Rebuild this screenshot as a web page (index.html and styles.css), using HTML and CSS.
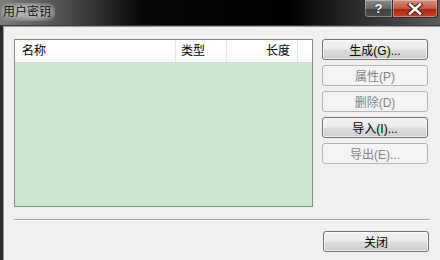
FILE: index.html
```html
<!DOCTYPE html>
<html lang="zh-CN">
<head>
  <meta charset="UTF-8" />
  <title>用户密钥</title>
  <link rel="stylesheet" href="styles.css">
</head>
<body>

<div class="window">
  <!-- Title bar -->
  <div class="titlebar">
    <span class="title">用户密钥</span>
    <div class="caption-buttons">
      <div class="cap-btn help">?</div>
      <div class="cap-btn close">
        <svg width="16" height="12" viewBox="0 0 16 12">
          <path d="M3 1.5 L13 10.5 M13 1.5 L3 10.5" stroke="#3a2020" stroke-width="4.6" stroke-linecap="square"/>
          <path d="M3 1.5 L13 10.5 M13 1.5 L3 10.5" stroke="#ffffff" stroke-width="2.6" stroke-linecap="square"/>
        </svg>
      </div>
    </div>
  </div>

  <div class="client">
    <div class="main">
      <!-- Key list -->
      <div class="listview">
        <div class="list-header">
          <div class="col col-name">名称</div>
          <div class="col col-type">类型</div>
          <div class="col col-len">长度</div>
          <div class="col col-fill"></div>
        </div>
        <div class="list-body"></div>
      </div>

      <!-- Actions -->
      <div class="actions">
        <button class="btn">生成(G)...</button>
        <button class="btn" disabled>属性(P)</button>
        <button class="btn" disabled>删除(D)</button>
        <button class="btn">导入(I)...</button>
        <button class="btn" disabled>导出(E)...</button>
      </div>
    </div>

    <div class="separator"></div>

    <div class="footer">
      <button class="btn">关闭</button>
    </div>
  </div>
</div>

</body>
</html>
```

FILE: styles.css
```css
body {
  margin: 0;
  padding: 0;
  width: 440px;
  height: 260px;
  overflow: hidden;
  background: #f0f0f0;
  font-family: "Liberation Sans", "Noto Sans CJK SC", sans-serif;
  font-size: 12px;
}

.window {
  height: 260px;
  display: flex;
  flex-direction: column;
}

/* Title bar */
.titlebar {
  height: 25px;
  flex: none;
  display: flex;
  justify-content: space-between;
  background: linear-gradient(to right, #7c7c7c 0px, #4a4a4a 70px, #080808 140px, #000000 290px, #2e2e2e 360px, #5a5a5a 440px);
}

.title {
  margin: 3px 0 0 1px;
  padding: 1px 4px 0 2px;
  height: 17px;
  font-size: 12px;
  line-height: 16px;
  color: #111111;
  border-radius: 6px;
  background: radial-gradient(ellipse at center, rgba(180,180,180,0.85) 40%, rgba(150,150,150,0.5) 75%, rgba(120,120,120,0) 100%);
  text-shadow: 0 0 4px rgba(210,210,210,0.9);
}

.caption-buttons {
  display: flex;
  align-self: flex-start;
  margin-right: 2px;
}

.cap-btn {
  height: 17px;
  display: flex;
  align-items: center;
  justify-content: center;
  border: 1px solid #2a2a2a;
  border-top: none;
  box-shadow: inset 0 0 0 1px rgba(255,255,255,0.35);
}

.help {
  width: 27px;
  border-radius: 0 0 0 4px;
  background: linear-gradient(#8a8a8a, #6a6a6a 50%, #3e3e3e 52%, #4e4e4e);
  color: #ffffff;
  font-weight: bold;
  font-size: 13px;
  text-shadow: 0 0 2px #000;
}

.close {
  width: 44px;
  border-left: none;
  border-radius: 0 0 4px 0;
  background: linear-gradient(#d78c7c, #c45a45 50%, #a8220c 52%, #c8452a);
}

/* Client area */
.client {
  flex: 1;
  border-top: 1px solid #3a3a3a;
  border-left: 3px solid #2a2a2a;
  box-shadow: inset 1px 1px 0 #9a9a9a;
  padding: 13px 11px 0 11px;
  display: flex;
  flex-direction: column;
}

.main {
  display: flex;
  gap: 9px;
}

.listview {
  width: 297px;
  height: 166px;
  border: 1px solid #828790;
  display: flex;
  flex-direction: column;
}

.list-header {
  height: 22px;
  display: flex;
  background: linear-gradient(#ffffff, #ffffff 50%, #f7f8fa);
  border-bottom: 1px solid #d5d5d5;
}

.col {
  line-height: 22px;
  border-right: 1px solid #e3e5e7;
  padding: 0 7px;
  color: #000;
}

.col-name {
  width: 146px;
}

.col-type {
  width: 36px;
  padding-left: 5px;
  padding-right: 9px;
}

.col-len {
  width: 56px;
  text-align: right;
}

.col-fill {
  flex: 1;
  border-right: none;
  padding: 0;
}

.list-body {
  flex: 1;
  background: #cce8cf;
}

.actions {
  display: flex;
  flex-direction: column;
  gap: 5px;
}

.btn {
  width: 106px;
  height: 21px;
  padding: 0;
  border: 1px solid #707070;
  border-radius: 3px;
  background: linear-gradient(#f2f2f2, #ebebeb 48%, #dddddd 52%, #cfcfcf);
  box-shadow: inset 0 0 0 1px rgba(255,255,255,0.7);
  font-family: "Liberation Sans", "Noto Sans CJK SC", sans-serif;
  font-size: 12px;
  color: #000;
}

.btn:disabled {
  border-color: #adb2b5;
  background: #f4f4f4;
  box-shadow: none;
  color: #838383;
}

.separator {
  margin-top: 12px;
  height: 1px;
  background: #a0a0a0;
  border-bottom: 1px solid #ffffff;
  margin-right: -1px;
}

.footer {
  display: flex;
  justify-content: flex-end;
  padding-top: 10px;
}
```
